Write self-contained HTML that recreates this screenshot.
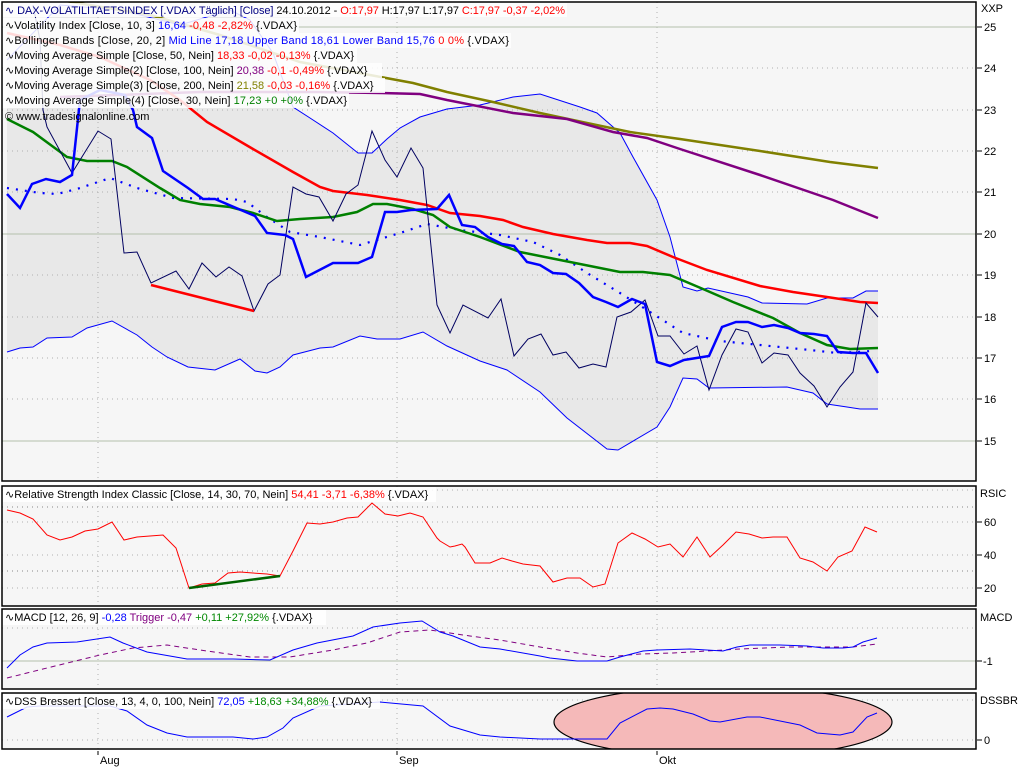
<!DOCTYPE html>
<html><head><meta charset="utf-8"><style>
html,body{margin:0;padding:0;background:#fff;width:1024px;height:768px;overflow:hidden}
svg{display:block}
text{font-family:"Liberation Sans",Arial,sans-serif;font-size:11px}
</style></head><body>
<svg width="1024" height="768" viewBox="0 0 1024 768" xmlns="http://www.w3.org/2000/svg">
<defs>
<clipPath id="cm"><rect x="2" y="2" width="974" height="479"/></clipPath>
<clipPath id="cd"><rect x="2" y="693" width="974" height="56"/></clipPath>
</defs>
<rect x="2" y="2" width="974" height="479" fill="#f6f6f6"/>
<rect x="2" y="486" width="974" height="120" fill="#f6f6f6"/>
<rect x="2" y="609" width="974" height="80" fill="#f6f6f6"/>
<rect x="2" y="693" width="974" height="56" fill="#f6f6f6"/>

<g clip-path="url(#cm)">
<polygon fill="#e8e8e8" points="7,60 60,5 120,10 180,25 230,10 250,20 273,53 293,107 310,118 333,133 358,153 372,153 387,139 400,128 420,117 447,109 480,105 513,97 540,94 580,107 597,113 620,133 633,157 657,200 670,237 683,287 697,291 708,288 748,297 762,303 807,304 827,298 853,298 866,291 878,291 878,409 860,409 847,407 827,404 813,393 787,387 709,388 697,379 683,378 670,407 657,427 618,450 607,449 567,418 540,392 507,370 480,361 447,346 423,332 400,339 377,339 360,336 333,347 320,348 293,355 280,367 267,373 255,371 240,359 215,370 188,367 167,357 152,347 137,335 112,321 87,328 72,337 47,338 33,347 20,348 7,352"/>
<g stroke="#b0b0b0" stroke-dasharray="1,4">
<line x1="2" y1="68" x2="976" y2="68"/><line x1="2" y1="110" x2="976" y2="110"/><line x1="2" y1="151" x2="976" y2="151"/><line x1="2" y1="192" x2="976" y2="192"/><line x1="2" y1="275" x2="976" y2="275"/><line x1="2" y1="317" x2="976" y2="317"/><line x1="2" y1="358" x2="976" y2="358"/><line x1="2" y1="399" x2="976" y2="399"/>
<line x1="98" y1="2" x2="98" y2="481"/><line x1="397" y1="2" x2="397" y2="481"/><line x1="657" y1="2" x2="657" y2="481"/>
</g>
<g stroke="#b4c0ac"><line x1="2" y1="27" x2="976" y2="27"/><line x1="2" y1="234" x2="976" y2="234"/><line x1="2" y1="441" x2="976" y2="441"/></g>
<polyline fill="none" stroke="#0000ff" stroke-width="1" points="7,60 60,5 120,10 180,25 230,10 250,20 273,53 293,107 310,118 333,133 358,153 372,153 387,139 400,128 420,117 447,109 480,105 513,97 540,94 580,107 597,113 620,133 633,157 657,200 670,237 683,287 697,291 708,288 748,297 762,303 807,304 827,298 853,298 866,291 878,291"/>
<polyline fill="none" stroke="#0000ff" stroke-width="1" points="7,352 20,348 33,347 47,338 72,337 87,328 112,321 137,335 152,347 167,357 188,367 215,370 240,359 255,371 267,373 280,367 293,355 320,348 333,347 360,336 377,339 400,339 423,332 447,346 480,361 507,370 540,392 567,418 607,449 618,450 657,427 670,407 683,378 697,379 709,388 787,387 813,393 827,404 847,407 860,409 878,409"/>
<polyline fill="none" stroke="#0000ff" stroke-width="2.2" stroke-dasharray="2,7" points="7,188 40,193 57,194 77,189 110,178 137,188 173,198 233,199 247,202 267,217 290,232 320,237 360,245 400,233 427,224 460,230 500,235 533,242 560,255 587,273 620,293 647,310 683,333 720,341 760,345 810,350 837,353 872,351"/>
<polyline fill="none" stroke="#808000" stroke-width="2.5" points="60,0 150,15 220,35 300,62 370,75 413,83 447,92 493,102 540,113 587,123 630,132 680,139 760,151 830,162 878,168"/>
<polyline fill="none" stroke="#800080" stroke-width="2.5" points="60,97 200,92 320,92 380,93 420,94 447,100 513,113 567,119 613,132 647,138 680,149 760,175 833,200 878,218"/>
<polyline fill="none" stroke="#ff0000" stroke-width="2.5" points="7,33 60,45 100,57 150,80 180,100 207,122 253,149 293,172 320,187 333,191 367,195 400,200 427,205 450,213 480,216 503,220 523,227 553,234 587,240 607,243 630,243 647,246 673,257 707,270 760,286 793,292 827,297 860,302 878,303"/>
<polyline fill="none" stroke="#008000" stroke-width="2.5" points="7,119 33,132 67,157 87,161 112,161 127,167 160,188 180,200 200,204 230,207 253,213 277,221 300,219 333,217 357,212 373,204 387,204 413,209 433,215 450,227 480,237 520,252 560,260 620,272 643,272 670,275 703,289 733,302 773,318 800,333 827,345 850,349 878,348"/>
<polyline fill="none" stroke="#000060" stroke-width="1" points="33,5 40,40 43,110 47,127 72,173 98,131 111,139 124,253 137,252 151,283 176,271 189,289 202,263 216,277 229,267 242,276 254,311 268,284 280,275 293,187 306,194 319,197 333,221 346,194 358,185 372,131 385,160 397,177 411,148 423,168 437,305 450,333 463,305 488,318 501,299 514,356 528,339 541,334 553,355 566,352 579,368 593,364 606,367 617,317 631,312 645,300 658,336 670,336 684,354 697,346 709,390 722,355 736,329 748,332 762,363 774,353 788,355 800,373 814,386 827,407 840,387 853,372 866,303 878,317"/>
<polyline fill="none" stroke="#0000ff" stroke-width="2.5" points="7,194 20,208 32,184 46,179 60,182 72,175 80,100 100,90 125,95 133,110 137,127 152,138 163,171 188,188 203,199 215,199 255,216 267,233 285,235 293,239 306,277 333,263 358,263 372,257 385,212 397,212 411,210 437,209 449,195 462,225 475,227 488,237 502,244 514,246 527,262 540,265 553,273 566,274 579,283 593,297 606,302 618,307 632,299 645,304 657,362 670,366 684,360 709,356 722,327 736,322 748,322 762,327 774,325 788,328 800,333 814,334 827,336 838,352 853,353 866,353 878,373"/>
<line x1="151" y1="285" x2="254" y2="311" stroke="#ff0000" stroke-width="2.5"/>
</g>

<g stroke="#b0b0b0" stroke-dasharray="1,4">
<line x1="2" y1="490" x2="976" y2="490"/><line x1="2" y1="507" x2="976" y2="507" stroke="#888"/><line x1="2" y1="522" x2="976" y2="522"/><line x1="2" y1="555" x2="976" y2="555"/><line x1="2" y1="571" x2="976" y2="571" stroke="#888"/><line x1="2" y1="588" x2="976" y2="588"/>
<line x1="98" y1="486" x2="98" y2="606"/><line x1="397" y1="486" x2="397" y2="606"/><line x1="657" y1="486" x2="657" y2="606"/>
<line x1="2" y1="628" x2="976" y2="628"/>
<line x1="98" y1="609" x2="98" y2="689"/><line x1="397" y1="609" x2="397" y2="689"/><line x1="657" y1="609" x2="657" y2="689"/>
<line x1="2" y1="700" x2="976" y2="700"/><line x1="2" y1="740" x2="976" y2="740"/>
<line x1="98" y1="693" x2="98" y2="749"/><line x1="397" y1="693" x2="397" y2="749"/><line x1="657" y1="693" x2="657" y2="749"/>
</g>
<line x1="2" y1="661" x2="976" y2="661" stroke="#b4c0ac"/>
<polyline fill="none" stroke="#ff0000" stroke-width="1" points="7,510 20,513 33,519 47,535 60,540 72,537 85,531 98,529 112,522 124,540 137,537 150,536 163,535 176,548 189,588 202,584 215,583 228,573 240,572 253,573 267,574 280,576 293,551 307,523 320,524 333,522 347,518 358,517 372,503 385,514 398,516 410,513 423,517 437,538 440,541 450,547 455,546 462,544 465,547 475,563 490,563 502,558 512,561 523,564 540,566 553,582 567,578 580,578 593,587 605,584 618,543 632,533 645,539 658,547 670,544 683,557 697,537 710,557 723,545 736,532 749,534 762,538 773,537 787,537 800,558 813,562 827,571 838,557 852,551 865,527 877,532"/>
<line x1="189" y1="588" x2="280" y2="576" stroke="#006400" stroke-width="2.5"/>
<polyline fill="none" stroke="#800080" stroke-width="1" stroke-dasharray="5,4" points="7,678 47,668 100,655 133,648 167,645 200,650 250,657 290,657 333,650 367,643 400,632 430,630 470,636 500,640 540,647 577,653 607,657 640,654 673,653 707,651 740,649 790,647 853,647 877,644"/>
<polyline fill="none" stroke="#0000ff" stroke-width="1" points="7,668 20,655 33,647 47,643 77,642 110,637 123,643 147,652 187,659 233,659 270,660 293,650 317,643 353,636 373,627 400,623 422,621 440,632 453,636 480,647 500,649 540,656 550,658 577,661 607,661 620,657 643,651 657,650 690,649 723,651 737,647 750,645 780,645 807,646 823,648 843,648 853,647 863,642 877,638"/>
<g clip-path="url(#cd)"><ellipse cx="723" cy="722" rx="169" ry="36" fill="#f5b9b9" stroke="#000" stroke-width="1.2"/></g>
<polyline fill="none" stroke="#0000ff" stroke-width="1" points="7,717 27,707 40,706 110,706 127,711 147,725 167,733 187,737 233,737 253,739 267,737 283,728 293,718 320,706 380,702 423,706 450,726 480,735 500,737 540,739 607,739 620,723 647,709 660,708 673,709 693,714 710,721 720,722 747,717 760,717 800,725 817,733 840,735 853,732 867,717 877,713"/>

<g fill="none" stroke="#000" stroke-width="1.5">
<rect x="2" y="2" width="974" height="479"/><rect x="2" y="486" width="974" height="120"/><rect x="2" y="609" width="974" height="80"/><rect x="2" y="693" width="974" height="56"/>
</g>

<g fill="#fff" opacity="0.85">
<rect x="3" y="3" width="564" height="14"/><rect x="3" y="18" width="296" height="15"/><rect x="3" y="33" width="508" height="15"/><rect x="3" y="48" width="354" height="15"/><rect x="3" y="63" width="379" height="15"/><rect x="3" y="78" width="382" height="15"/><rect x="3" y="93" width="346" height="15"/>
<rect x="3" y="487" width="433" height="15"/><rect x="3" y="610" width="323" height="15"/><rect x="3" y="694" width="377" height="15"/>
</g>
<g>
<text x="5" y="14" fill="#000080" textLength="560" lengthAdjust="spacing">∿ DAX-VOLATILITAETSINDEX [.VDAX  Täglich] [Close] <tspan fill="#000">24.10.2012 - </tspan><tspan fill="#f00">O:17,97 </tspan><tspan fill="#000">H:17,97 L:17,97 </tspan><tspan fill="#f00">C:17,97 -0,37 -2,02%</tspan></text>
<text x="5" y="29" textLength="292" lengthAdjust="spacing">∿Volatility Index [Close, 10, 3] <tspan fill="#00f">16,64 </tspan><tspan fill="#f00">-0,48 -2,82% </tspan>{.VDAX}</text>
<text x="5" y="44" textLength="504" lengthAdjust="spacing">∿Bollinger Bands [Close, 20, 2] <tspan fill="#00f">Mid Line 17,18 Upper Band 18,61 Lower Band 15,76 </tspan><tspan fill="#f00">0 0% </tspan>{.VDAX}</text>
<text x="5" y="59">∿Moving Average Simple [Close, 50, Nein] <tspan fill="#f00">18,33 -0,02 -0,13% </tspan>{.VDAX}</text>
<text x="5" y="74">∿Moving Average Simple(2) [Close, 100, Nein] <tspan fill="#800080">20,38 </tspan><tspan fill="#f00">-0,1 -0,49% </tspan>{.VDAX}</text>
<text x="5" y="89">∿Moving Average Simple(3) [Close, 200, Nein] <tspan fill="#808000">21,58 </tspan><tspan fill="#f00">-0,03 -0,16% </tspan>{.VDAX}</text>
<text x="5" y="104" textLength="342" lengthAdjust="spacing">∿Moving Average Simple(4) [Close, 30, Nein] <tspan fill="#008000">17,23 +0 +0% </tspan>{.VDAX}</text>
<text x="5" y="120">© www.tradesignalonline.com</text>
<text x="5" y="498">∿Relative Strength Index Classic [Close, 14, 30, 70, Nein] <tspan fill="#f00">54,41 -3,71 -6,38% </tspan>{.VDAX}</text>
<text x="5" y="621">∿MACD [12, 26, 9] <tspan fill="#00f">-0,28 </tspan><tspan fill="#800080">Trigger -0,47 </tspan><tspan fill="#080">+0,11 +27,92% </tspan>{.VDAX}</text>
<text x="5" y="705">∿DSS Bressert [Close, 13, 4, 0, 100, Nein] <tspan fill="#00f">72,05 </tspan><tspan fill="#080">+18,63 +34,88% </tspan>{.VDAX}</text>
</g>

<g stroke="#000">
<line x1="977" y1="27" x2="982" y2="27"/><line x1="977" y1="68" x2="982" y2="68"/><line x1="977" y1="110" x2="982" y2="110"/><line x1="977" y1="151" x2="982" y2="151"/><line x1="977" y1="192" x2="982" y2="192"/><line x1="977" y1="234" x2="982" y2="234"/><line x1="977" y1="275" x2="982" y2="275"/><line x1="977" y1="317" x2="982" y2="317"/><line x1="977" y1="358" x2="982" y2="358"/><line x1="977" y1="399" x2="982" y2="399"/><line x1="977" y1="441" x2="982" y2="441"/>
<line x1="977" y1="522" x2="982" y2="522"/><line x1="977" y1="555" x2="982" y2="555"/><line x1="977" y1="588" x2="982" y2="588"/><line x1="977" y1="661" x2="982" y2="661"/><line x1="977" y1="740" x2="982" y2="740"/>
<line x1="98" y1="751" x2="98" y2="755"/><line x1="397" y1="751" x2="397" y2="755"/><line x1="657" y1="751" x2="657" y2="755"/>
</g>
<g>
<text x="981" y="12">XXP</text>
<text x="984" y="31">25</text><text x="984" y="72">24</text><text x="984" y="114">23</text><text x="984" y="155">22</text><text x="984" y="196">21</text><text x="984" y="238">20</text><text x="984" y="279">19</text><text x="984" y="321">18</text><text x="984" y="362">17</text><text x="984" y="403">16</text><text x="984" y="445">15</text>
<text x="980" y="497">RSIC</text><text x="984" y="526">60</text><text x="984" y="559">40</text><text x="984" y="592">20</text>
<text x="980" y="621">MACD</text><text x="983" y="665">-1</text>
<text x="980" y="704">DSSBR</text><text x="984" y="744">0</text>
<text x="100" y="764">Aug</text><text x="399" y="764">Sep</text><text x="659" y="764">Okt</text>
</g>
</svg>
</body></html>
